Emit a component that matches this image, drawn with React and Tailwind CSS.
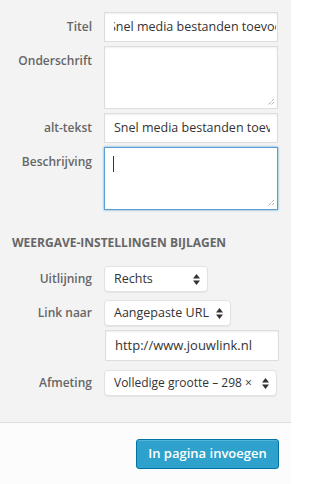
import React from 'react';

const font = { fontFamily: '"Open Sans", "Noto Sans", sans-serif' };

const Label = ({ children, top = 'pt-[6px]' }) => (
  <div className={`w-[92px] shrink-0 text-right text-[12px] leading-[18px] font-semibold text-[#666] ${top}`}>
    {children}
  </div>
);

const Grip = () => (
  <svg className="absolute right-[2px] bottom-[2px]" width="8" height="8" viewBox="0 0 8 8">
    <path d="M7 1 L1 7 M7 4 L4 7" stroke="#888" strokeWidth="1" strokeDasharray="1 1" />
  </svg>
);

const Arrows = () => (
  <svg width="7" height="11" viewBox="0 0 7 11" className="shrink-0">
    <path d="M3.5 0 L7 4.5 L0 4.5 Z M0 6.5 L7 6.5 L3.5 11 Z" fill="#333" />
  </svg>
);

const Select = ({ value, width, size = 'text-[12.5px]' }) => (
  <div
    className={`${width} h-[26px] ml-[12px] flex items-center gap-[4px] pl-[9px] pr-[7px] bg-white rounded-[4px] border border-[#e2e2e2] shadow-[0_1px_1px_rgba(0,0,0,0.06)] ${size} text-[#333] whitespace-nowrap`}
  >
    <span className="flex-1 min-w-0 overflow-hidden">{value}</span>
    <Arrows />
  </div>
);

const inputBox =
  'ml-[12px] w-[174px] bg-white border border-[#ddd] shadow-[inset_0_1px_2px_rgba(0,0,0,0.07)] text-[#333] whitespace-nowrap';

export default function App() {
  return (
    <div style={font} className="w-[291px] h-[484px] bg-[#f3f3f3] flex flex-col overflow-hidden">
      <div className="flex flex-col pt-[12px]">
        <div className="flex">
          <Label>Titel</Label>
          <div className={`${inputBox} h-[30px] flex items-center pl-[9px] pr-[1px] text-[12.5px]`}>
            <div className="overflow-hidden w-full">
              <span className="-ml-[5px] inline-block">Snel media bestanden toevoegen</span>
            </div>
          </div>
        </div>

        <div className="flex mt-[4px]">
          <Label>Onderschrift</Label>
          <div className={`${inputBox} h-[63px] relative`}>
            <Grip />
          </div>
        </div>

        <div className="flex mt-[4px]">
          <Label>alt-tekst</Label>
          <div className={`${inputBox} h-[30px] flex items-center pl-[9px] pr-[7px] text-[12.5px]`}>
            <div className="overflow-hidden w-full">
              <span>Snel media bestanden toevoegen</span>
            </div>
          </div>
        </div>

        <div className="flex mt-[4px]">
          <Label>Beschrijving</Label>
          <div className="ml-[12px] w-[174px] h-[63px] bg-white border border-[#5b9dd9] shadow-[0_0_2px_rgba(30,140,190,0.8)] relative">
            <div className="absolute left-[8px] top-[8px] w-px h-[16px] bg-[#333]" />
            <Grip />
          </div>
        </div>
      </div>

      <div className="mt-[25px] pl-[12px] text-[12px] leading-[16px] font-bold text-[#666] uppercase">
        Weergave-instellingen bijlagen
      </div>

      <div className="flex flex-col mt-[15px]">
        <div className="flex">
          <Label top="pt-[4px]">Uitlijning</Label>
          <Select value="Rechts" width="w-[104px]" />
        </div>
        <div className="flex mt-[8px]">
          <Label top="pt-[4px]">Link naar</Label>
          <Select value="Aangepaste URL" width="w-[127px]" />
        </div>
        <div className="flex mt-[4px]">
          <div className="w-[92px] shrink-0" />
          <div className={`${inputBox} h-[31px] flex items-center px-[9px] ml-[13px] overflow-hidden text-[13px]`}>
            <span>http://www.jouwlink.nl</span>
          </div>
        </div>
        <div className="flex mt-[9px]">
          <Label top="pt-[4px]">Afmeting</Label>
          <Select value="Volledige grootte – 298 ×" width="w-[173px]" size="text-[12px]" />
        </div>
      </div>

      <div className="mt-[26px] border-t border-[#dddddd] bg-[#fcfcfc] flex-1 flex justify-end items-start pt-[16px] pr-[12px]">
        <button className="h-[30px] w-[143px] rounded-[3px] bg-[#2ea2cc] border border-[#0074a2] shadow-[inset_0_1px_0_rgba(120,200,230,0.5)] text-white text-[13px] font-semibold">
          In pagina invoegen
        </button>
      </div>
    </div>
  );
}
